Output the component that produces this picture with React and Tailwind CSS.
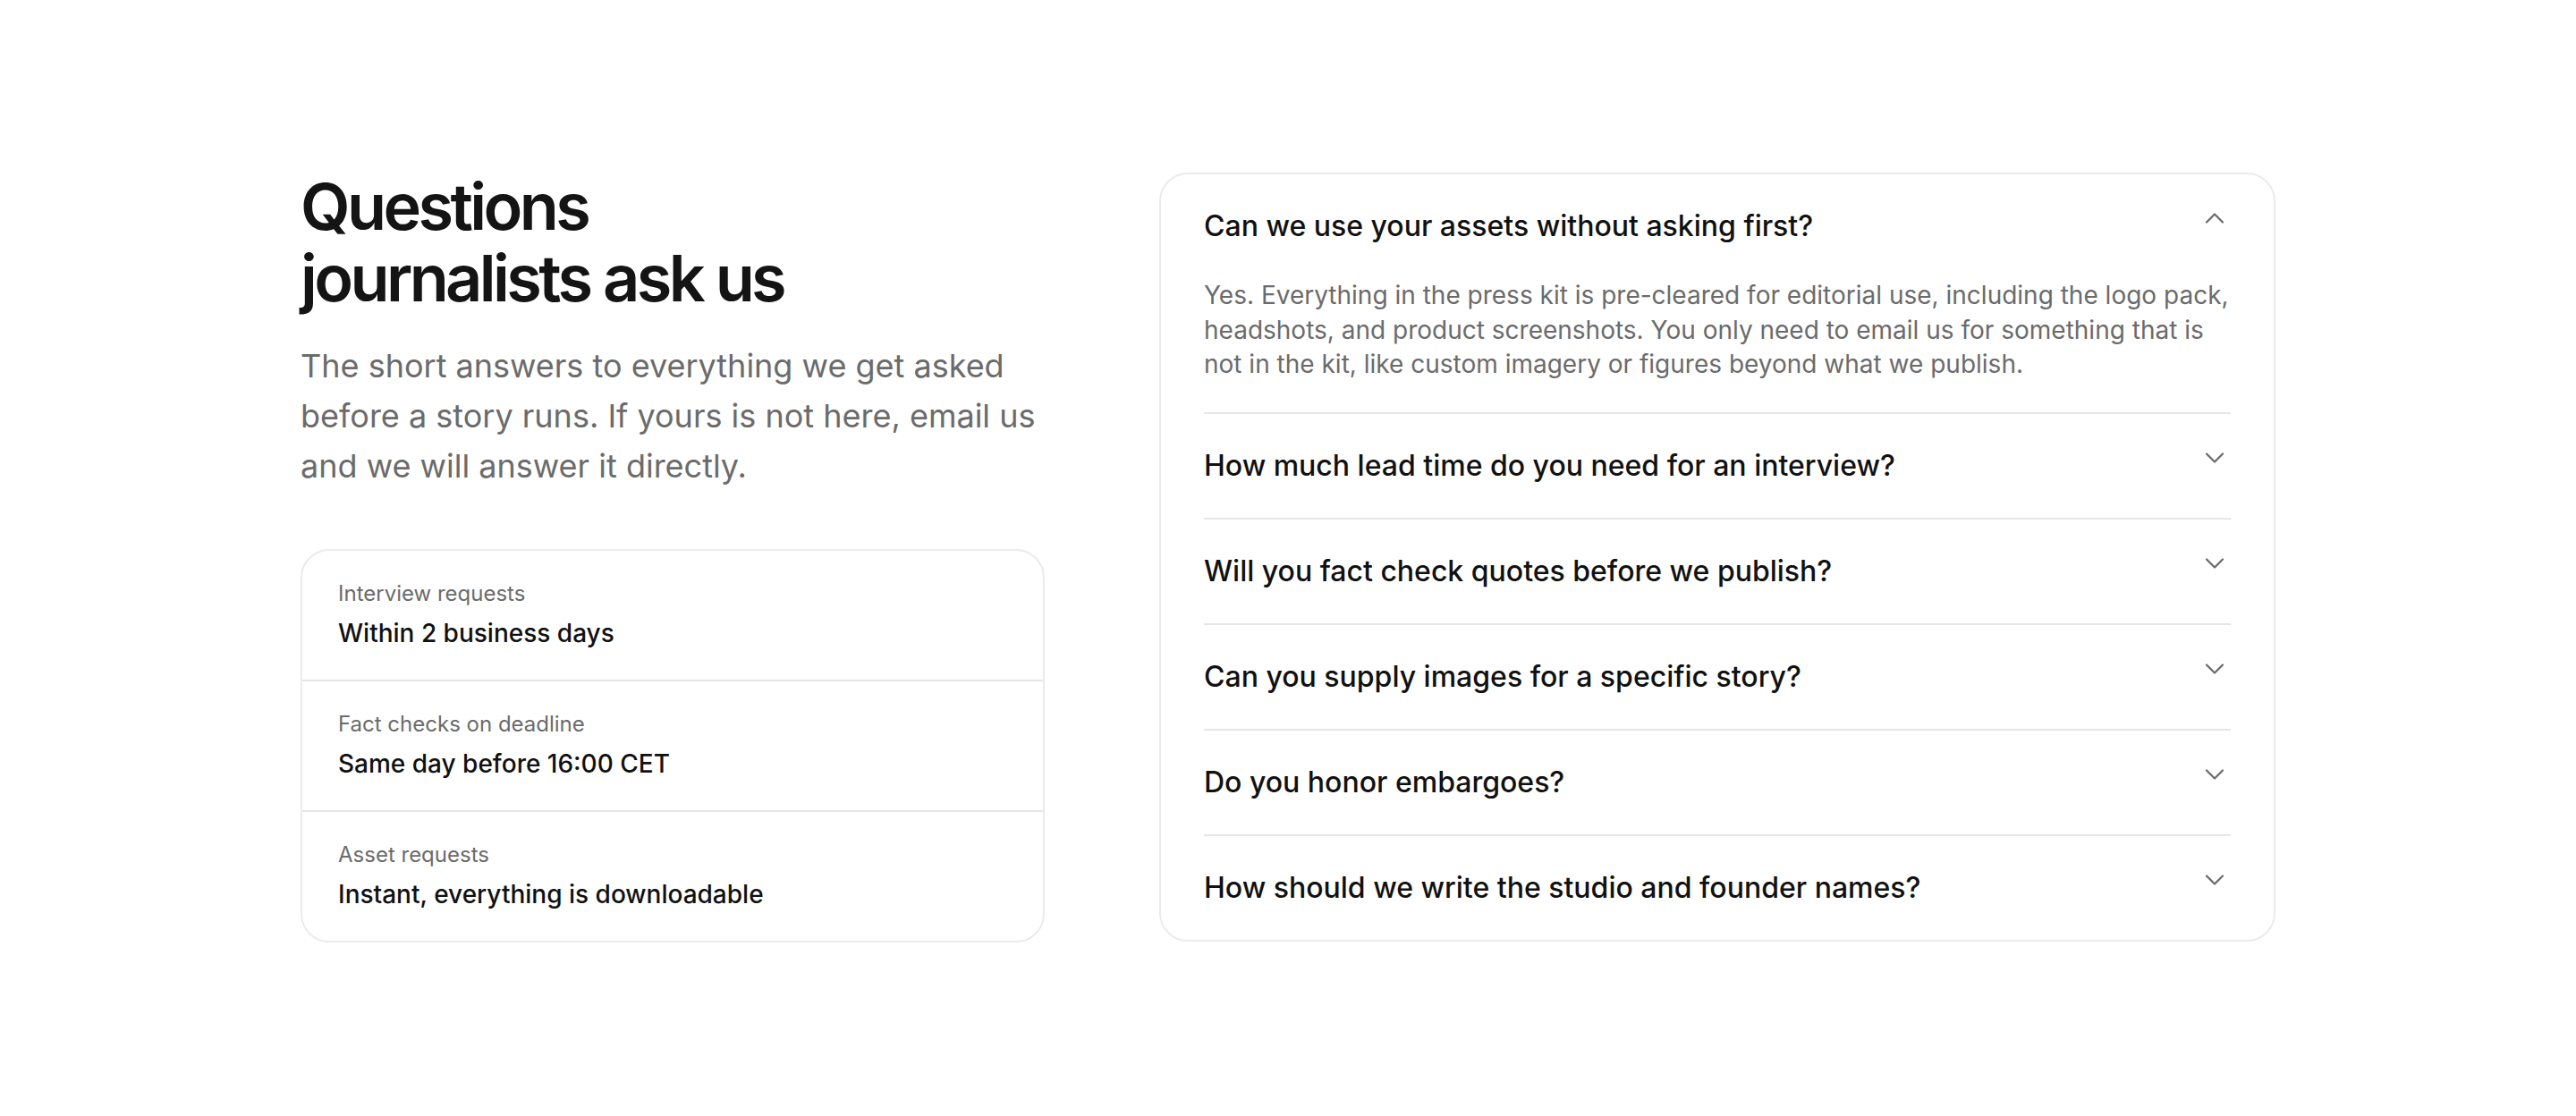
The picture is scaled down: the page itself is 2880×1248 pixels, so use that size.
import { useState } from "react";
import { ChevronDown, ChevronUp } from "lucide-react";

const stats = [
  { label: "Interview requests", value: "Within 2 business days" },
  { label: "Fact checks on deadline", value: "Same day before 16:00 CET" },
  { label: "Asset requests", value: "Instant, everything is downloadable" },
];

const faqs = [
  {
    q: "Can we use your assets without asking first?",
    a: "Yes. Everything in the press kit is pre-cleared for editorial use, including the logo pack, headshots, and product screenshots. You only need to email us for something that is not in the kit, like custom imagery or figures beyond what we publish.",
  },
  {
    q: "How much lead time do you need for an interview?",
    a: "Two business days is usually enough. For live broadcast or on-site visits, give us a week so we can line up the right people.",
  },
  {
    q: "Will you fact check quotes before we publish?",
    a: "We are happy to confirm figures and spellings. We do not ask for copy approval.",
  },
  {
    q: "Can you supply images for a specific story?",
    a: "Yes. Tell us the angle and format and we will send what we have, usually the same day.",
  },
  {
    q: "Do you honor embargoes?",
    a: "Always. Embargoed material is marked clearly with the date and time it lifts.",
  },
  {
    q: "How should we write the studio and founder names?",
    a: "The exact spellings are listed on the first page of the press kit.",
  },
];

function FaqItem({ item, open, onToggle, last }) {
  return (
    <div className={last ? "" : "border-b-2 border-[#e6e6e6]"}>
      <button
        type="button"
        onClick={onToggle}
        className="flex w-full items-start justify-between gap-6 py-[34px] text-left"
      >
        <span className="text-[32px] font-medium leading-[48px] text-[#111111]">
          {item.q}
        </span>
        {open ? (
          <ChevronUp size={36} strokeWidth={1.5} className="mt-[-3px] shrink-0 text-[#6b6b6b]" />
        ) : (
          <ChevronDown size={36} strokeWidth={1.5} className="mt-[-3px] shrink-0 text-[#6b6b6b]" />
        )}
      </button>
      {open && (
        <p className="pb-[34px] text-[28px] leading-[38.5px] text-[#6b6b6b]">{item.a}</p>
      )}
    </div>
  );
}

export default function App() {
  const [openIndex, setOpenIndex] = useState(0);

  return (
    <div className="min-h-screen bg-white font-['Inter',sans-serif] antialiased">
      <section className="mx-auto grid max-w-[2208px] grid-cols-[2fr_3fr] items-start gap-32 py-[193px]">
        <div>
          <h2 className="-mt-[2px] text-[72px] font-semibold leading-[80px] tracking-[-0.05em] text-[#141414]">
            Questions
            <br />
            journalists ask us
          </h2>
          <p className="mt-[30px] text-[36px] leading-[56px] text-[#6b6b6b]">
            The short answers to everything we get asked before a story runs. If yours is
            not here, email us and we will answer it directly.
          </p>

          <div className="mt-[65px] overflow-hidden rounded-[32px] border-2 border-[#ebebeb]">
            {stats.map((s, i) => (
              <div
                key={s.label}
                className={
                  "flex flex-col gap-2 px-10 py-8" +
                  (i < stats.length - 1 ? " border-b-2 border-[#e6e6e6]" : "")
                }
              >
                <span className="text-[24px] leading-8 text-[#6b6b6b]">{s.label}</span>
                <span className="text-[28px] font-medium leading-10 text-[#111111]">
                  {s.value}
                </span>
              </div>
            ))}
          </div>
        </div>

        <div className="rounded-[32px] border-2 border-[#ebebeb] px-12">
          {faqs.map((item, i) => (
            <FaqItem
              key={item.q}
              item={item}
              open={openIndex === i}
              last={i === faqs.length - 1}
              onToggle={() => setOpenIndex(openIndex === i ? -1 : i)}
            />
          ))}
        </div>
      </section>
    </div>
  );
}
